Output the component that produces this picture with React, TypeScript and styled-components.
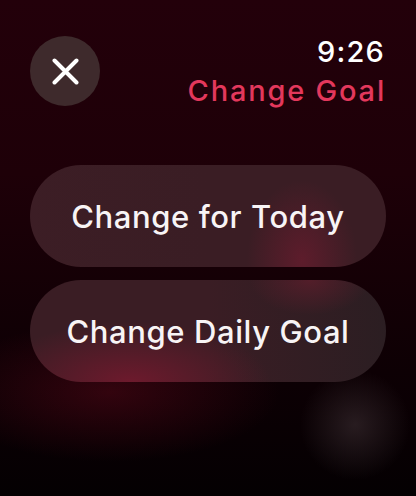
import React from "react";
import styled, { createGlobalStyle } from "styled-components";

const Global = createGlobalStyle`
  html, body { margin: 0; padding: 0; background: #000; }
  body { font-family: Inter, "Noto Sans", sans-serif; -webkit-font-smoothing: antialiased; }
`;

const Screen = styled.div`
  position: relative;
  width: 416px;
  height: 496px;
  overflow: hidden;
  background:
    radial-gradient(55px 55px at 355px 425px, rgba(70, 55, 60, 0.5), rgba(70, 55, 60, 0) 100%),
    radial-gradient(170px 70px at 110px 392px, rgba(110, 10, 30, 0.4), rgba(110, 10, 30, 0) 100%),
    linear-gradient(180deg, #23000a 0%, #1e0008 35%, #0d0004 75%, #040002 100%);
  display: flex;
  flex-direction: column;
  padding: 36px 30px 0 30px;
  box-sizing: border-box;
`;

const Header = styled.div`
  display: flex;
  justify-content: space-between;
  align-items: flex-start;
  height: 72px;
`;

const CloseButton = styled.button`
  width: 70px;
  height: 70px;
  border-radius: 50%;
  border: none;
  padding: 0;
  background: #3e2a2c;
  display: flex;
  align-items: center;
  justify-content: center;
  cursor: pointer;
`;

const TitleBlock = styled.div`
  display: flex;
  flex-direction: column;
  align-items: flex-end;
  margin-right: 2px;
`;

const Time = styled.div`
  color: #ffffff;
  font-size: 29px;
  font-weight: 500;
  line-height: 34px;
  letter-spacing: 1.2px;
  margin-top: -1px;
  margin-right: -1px;
`;

const Title = styled.div`
  color: #e3385c;
  font-size: 29px;
  font-weight: 500;
  line-height: 34px;
  letter-spacing: 1.8px;
  margin-top: 5px;
  margin-right: -2px;
`;

const Buttons = styled.div`
  display: flex;
  flex-direction: column;
  gap: 13px;
  margin-top: 57px;
`;

const Pill = styled.button<{ $glow: string }>`
  height: 102px;
  width: 356px;
  border-radius: 51px;
  border: none;
  background: ${(p) => p.$glow}, #3a1d24;
  color: #f8f4f5;
  font-family: Inter, "Noto Sans", sans-serif;
  font-size: 31px;
  font-weight: 500;
  letter-spacing: 0.6px;
  display: flex;
  align-items: center;
  justify-content: center;
  cursor: pointer;
`;

const glow1 =
  "radial-gradient(55px 80px at 272px 95px, rgba(105, 28, 46, 0.75), rgba(105, 28, 46, 0) 100%), linear-gradient(90deg, rgba(62,30,38,0.5), rgba(62,30,38,0) 50%)";
const glow2 =
  "radial-gradient(140px 60px at 100px 102px, rgba(118, 25, 46, 0.85), rgba(118, 25, 46, 0) 100%), radial-gradient(60px 35px at 280px 0px, rgba(105, 30, 46, 0.6), rgba(105, 30, 46, 0) 100%), linear-gradient(90deg, rgba(40,28,32,0) 50%, rgba(42,30,34,0.9) 100%)";

export default function App() {
  return (
    <>
      <Global />
      <Screen>
        <Header>
          <CloseButton aria-label="Close">
            <svg width="27" height="27" viewBox="0 0 27 27">
              <path d="M2.5 2.5 L24.5 24.5 M24.5 2.5 L2.5 24.5" stroke="#fff" strokeWidth="4" strokeLinecap="round" />
            </svg>
          </CloseButton>
          <TitleBlock>
            <Time>9:26</Time>
            <Title>Change Goal</Title>
          </TitleBlock>
        </Header>
        <Buttons>
          <Pill $glow={glow1}>Change for Today</Pill>
          <Pill $glow={glow2}>Change Daily Goal</Pill>
        </Buttons>
      </Screen>
    </>
  );
}
